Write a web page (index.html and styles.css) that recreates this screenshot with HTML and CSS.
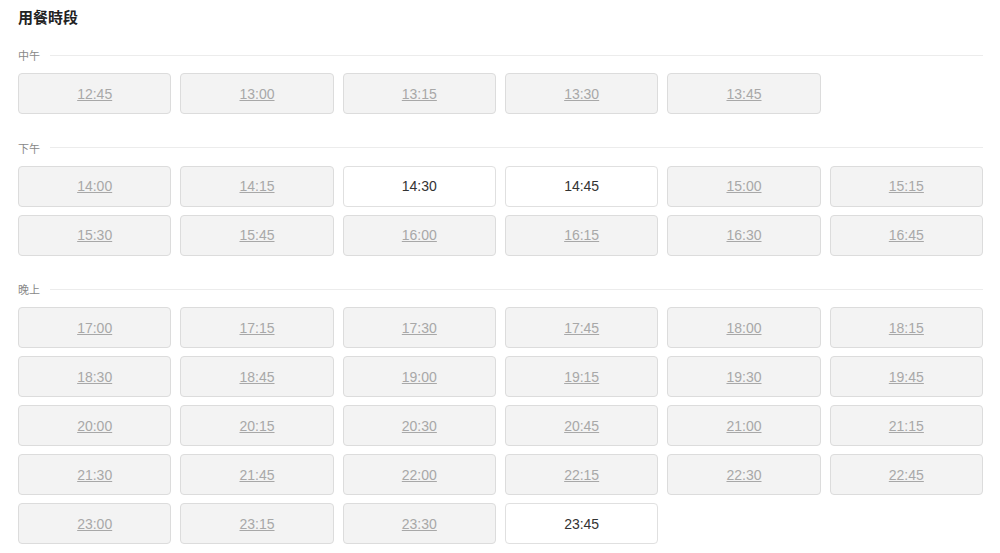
FILE: index.html
```html
<!DOCTYPE html>
<html lang="zh-Hant">
<head>
    <meta charset="UTF-8">
    <meta name="viewport" content="width=device-width, initial-scale=1.0">
    <title>用餐時段</title>
    <link rel="stylesheet" href="styles.css">
</head>
<body>
    <div class="horarios">
        <h2 class="titulo">用餐時段</h2>

        <div class="seccion">
            <div class="seccion-cabecera"><span>中午</span></div>
            <div class="rejilla">
                <a class="hora agotado">12:45</a>
                <a class="hora agotado">13:00</a>
                <a class="hora agotado">13:15</a>
                <a class="hora agotado">13:30</a>
                <a class="hora agotado">13:45</a>
            </div>
        </div>

        <div class="seccion">
            <div class="seccion-cabecera"><span>下午</span></div>
            <div class="rejilla">
                <a class="hora agotado">14:00</a>
                <a class="hora agotado">14:15</a>
                <a class="hora">14:30</a>
                <a class="hora">14:45</a>
                <a class="hora agotado">15:00</a>
                <a class="hora agotado">15:15</a>
                <a class="hora agotado">15:30</a>
                <a class="hora agotado">15:45</a>
                <a class="hora agotado">16:00</a>
                <a class="hora agotado">16:15</a>
                <a class="hora agotado">16:30</a>
                <a class="hora agotado">16:45</a>
            </div>
        </div>

        <div class="seccion">
            <div class="seccion-cabecera"><span>晚上</span></div>
            <div class="rejilla">
                <a class="hora agotado">17:00</a>
                <a class="hora agotado">17:15</a>
                <a class="hora agotado">17:30</a>
                <a class="hora agotado">17:45</a>
                <a class="hora agotado">18:00</a>
                <a class="hora agotado">18:15</a>
                <a class="hora agotado">18:30</a>
                <a class="hora agotado">18:45</a>
                <a class="hora agotado">19:00</a>
                <a class="hora agotado">19:15</a>
                <a class="hora agotado">19:30</a>
                <a class="hora agotado">19:45</a>
                <a class="hora agotado">20:00</a>
                <a class="hora agotado">20:15</a>
                <a class="hora agotado">20:30</a>
                <a class="hora agotado">20:45</a>
                <a class="hora agotado">21:00</a>
                <a class="hora agotado">21:15</a>
                <a class="hora agotado">21:30</a>
                <a class="hora agotado">21:45</a>
                <a class="hora agotado">22:00</a>
                <a class="hora agotado">22:15</a>
                <a class="hora agotado">22:30</a>
                <a class="hora agotado">22:45</a>
                <a class="hora agotado">23:00</a>
                <a class="hora agotado">23:15</a>
                <a class="hora agotado">23:30</a>
                <a class="hora">23:45</a>
            </div>
        </div>
    </div>
</body>
</html>
```

FILE: styles.css
```css
body {
    margin: 0;
    padding: 0;
    background: #fff;
    color: #333;
    font-family: "Liberation Sans", "Noto Sans CJK TC", sans-serif;
}

.horarios {
    padding: 8px 17px 0 18px;
}

.titulo {
    margin: 0 0 19px;
    font-size: 15px;
    line-height: 20px;
    font-weight: bold;
    color: #222;
}

.seccion {
    margin-bottom: 25.5px;
}

/* Etiqueta del grupo con la línea a la derecha */
.seccion-cabecera {
    display: flex;
    align-items: center;
    gap: 10px;
    height: 16px;
    margin-bottom: 10px;
    font-size: 11px;
    color: #888;
}

.seccion-cabecera::after {
    content: "";
    flex: 1;
    height: 1px;
    background: #ececec;
}

.rejilla {
    display: grid;
    grid-template-columns: repeat(6, 1fr);
    gap: 8px 9px;
}

.hora {
    display: flex;
    align-items: center;
    justify-content: center;
    height: 41px;
    box-sizing: border-box;
    border: 1px solid #e0e0e0;
    border-radius: 4px;
    background: #fff;
    font-size: 14px;
    color: #333;
    cursor: pointer;
}

.hora.agotado {
    background: #f3f3f3;
    border-color: #dcdcdc;
    color: #a8a8a8;
    text-decoration: underline;
    cursor: default;
}
```
